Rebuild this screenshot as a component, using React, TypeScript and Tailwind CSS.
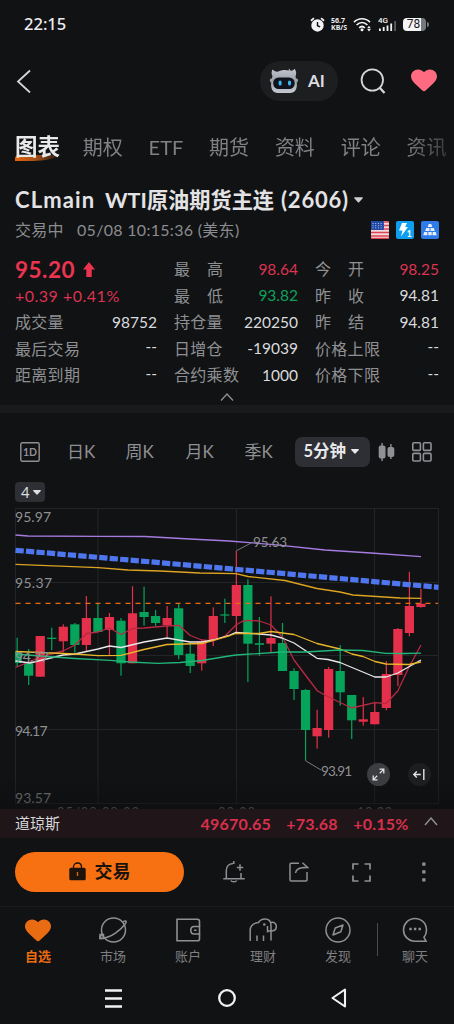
import type { ReactNode } from 'react';

const tabs = ['期权', 'ETF', '期货', '资料', '评论', '资讯'];

type Quote = { label: string; value: string; color?: string };

const quotes: Quote[][] = [
  [
    { label: '成交量', value: '98752' },
    { label: '最后交易', value: '--' },
    { label: '距离到期', value: '--' },
  ],
  [
    { label: '最高', value: '98.64', color: 'text-[#dc3350]' },
    { label: '最低', value: '93.82', color: 'text-[#0fa05c]' },
    { label: '持仓量', value: '220250' },
    { label: '日增仓', value: '-19039' },
    { label: '合约乘数', value: '1000' },
  ],
  [
    { label: '今开', value: '98.25', color: 'text-[#dc3350]' },
    { label: '昨收', value: '94.81' },
    { label: '昨结', value: '94.81' },
    { label: '价格上限', value: '--' },
    { label: '价格下限', value: '--' },
  ],
];

const UP = '#e5304b';
const DOWN = '#06a45b';

// [body top, body bottom, wick top, wick bottom, rising]
const candles: [number, number, number, number, boolean][] = [
  [652, 663, 637.7, 666.7, false],
  [663.3, 675.7, 649, 685, false],
  [636, 676.7, 636, 676.7, true],
  [637.7, 639, 627.7, 650, false],
  [626.7, 641.3, 624.3, 652.3, true],
  [624.3, 645, 623, 652.7, false],
  [618, 645, 596, 651, true],
  [618, 632, 604, 632, false],
  [617, 630, 613, 655, true],
  [620.7, 663.3, 618, 675.7, false],
  [613.3, 663.3, 586.3, 663.3, true],
  [612, 617, 586.7, 625.7, false],
  [616, 623, 610, 626, false],
  [618, 625.3, 606, 637, true],
  [608.3, 655, 603.3, 659.3, false],
  [653.7, 666, 641.7, 673, false],
  [641.3, 663.3, 640, 670.7, true],
  [616, 640, 607.3, 646, true],
  [614.4, 615.6, 598.7, 623, false],
  [585, 616, 550.7, 633, true],
  [585, 643.7, 579.3, 682, false],
  [643.2, 644.8, 617, 655.7, false],
  [638, 643.7, 596.3, 652.3, true],
  [643, 671, 623, 671, false],
  [671, 689, 668.3, 700, false],
  [690, 730, 689, 760.7, false],
  [728, 736.3, 709.7, 748.7, true],
  [669, 730, 667, 737.7, true],
  [671, 692.3, 645, 705.7, false],
  [695, 720.3, 695, 739, false],
  [719.3, 721.7, 697, 725.7, true],
  [712, 724.3, 702.7, 724.3, true],
  [674, 708, 661, 710.3, true],
  [629, 675, 628, 686, true],
  [606, 633, 571.7, 636.3, true],
  [603.8, 607, 589, 607.7, true],
];

const averages = [
  { color: '#a57be0', points: '15.5,535 28,536 98,536.3 145,536.5 190,539 229,541 274,544.7 325,550 371,553 421,556.7' },
  {
    color: '#dba321',
    points:
      '15.5,564.3 98,567.7 128,570 160,571 200,573 236,573.7 248,576.5 285,580.5 317,588.5 340,592 353,595 400,598 421,598.3',
  },
  {
    color: '#b82a42',
    points:
      '15.5,667.5 28.7,662 40,657 63,651 75,645 86.5,633.5 98,632 109.5,628 121,634.5 132.7,628.5 144,628 167,626 178.8,625.3 190.3,635.5 201.8,640 213,641 225,636 236,625 242,621.5 248,620.3 259.5,621 271,625 282.5,637 294,660 317.5,691 328.6,697 351.7,708 374.8,702.7 386,703.5 397.8,691 409,667 421,645',
  },
  {
    color: '#e8e8ea',
    points:
      '15.5,661 30,663 63,655 75,654 98,649 109.5,646 121,647.5 144,642 167,638 190,642 202,642 213,640 230,635 236,632.3 271,635 282,638 294,643 317,658.3 328,659.5 340,662.5 374.8,677 386,677 397.8,673 421,660',
  },
  {
    color: '#e9b52a',
    points:
      '15.5,651.5 40,652.5 75,654 98,655.7 121,655.3 144,649.5 167,644.5 202,643.5 230,635.5 236,633.5 259,633.5 271,631.5 294,634.5 317,643.5 340,649 352,654 363,656.5 375,661.5 386,664 409,664.5 421,662',
  },
  {
    color: '#22b57a',
    points:
      '15.5,654 40,656 75,658.5 110,660.3 130,662 158,663.3 180,662.5 202,660.5 229,656 236,655 282,652 305,652 340,650 363,650.5 386,653.3 405,653.5 421,653.2',
  },
];

function Caret({ className }: { className: string }) {
  return (
    <svg viewBox="0 0 10 6" className={className} fill="currentColor">
      <path d="M.8 0h8.4c.6 0 .9.6.5 1L5.6 5.6a.8.8 0 0 1-1.2 0L.3 1C-.1.6.2 0 .8 0Z" />
    </svg>
  );
}

function Heart({ className }: { className: string }) {
  return (
    <svg viewBox="0 0 27 23" className={className} fill="currentColor">
      <path d="M13.5 3C15.4 .8 17.3 0 19.6 0 23.7 0 27 3 27 7.2 27 10.2 25.4 12.4 23 14.6L15.2 22C14.2 23 12.8 23 11.8 22L4 14.6C1.6 12.4 0 10.2 0 7.2 0 3 3.3 0 7.4 0 9.7 0 11.6.8 13.5 3Z" />
    </svg>
  );
}

function StatusBar() {
  return (
    <div className="flex h-12 shrink-0 items-center pl-6 pr-[25px] text-[#ececee]">
      <span className="font-['Noto_Sans'] text-[16.5px] font-medium">22:15</span>
      <div className="ml-auto flex h-4 items-center">
        <svg viewBox="0 0 16 16" className="h-[15px] w-[15px]">
          <circle cx="8" cy="9" r="6.6" fill="#f4f4f5" />
          <path d="M1 4 4.2 1.2M15 4 11.8 1.2" stroke="#f4f4f5" strokeWidth="1.8" />
          <path d="M8 5.3V9.3L10.8 10.6" stroke="#111214" strokeWidth="1.5" fill="none" />
        </svg>
        <div className="ml-1.5 flex w-[17px] flex-col font-['Noto_Sans'] text-[7px] font-bold leading-[7px]">
          <span>56.7</span>
          <span>KB/S</span>
        </div>
        <svg viewBox="0 0 19 15" className="ml-[5px] h-[15px] w-[19px]" fill="none" stroke="#f4f4f5">
          <path d="M1 5.2C5.5.6 12.5.6 17 5.2M3.6 8C6.8 4.8 11.2 4.8 14.4 8M6.2 10.8C7.9 9.2 10.1 9.2 11.8 10.8" strokeWidth="1.7" />
          <circle cx="9" cy="12.8" r="1.5" fill="#f4f4f5" stroke="none" />
          <path d="m16 8.8 1.8 2.5h-3.6ZM16 14.500l1.800-2.500h-3.600Z" fill="#f4f4f5" stroke="none" />
        </svg>
        <svg viewBox="0 0 20 16" className="ml-[6px] h-4 w-5" fill="#f4f4f5">
          <text x="0" y="7.2" fontSize="8" fontWeight="500" fontFamily="Roboto">4G</text>
          <path d="M1 12.500h1.800v2.500H1ZM4.800 11h1.800v4H4.800ZM8.600 9.500h1.800V15H8.600ZM12.300 7.500h1.800V15h-1.800Z" />
          <path d="M16.200 5H18v10h-1.800Z" fill="#5b5c5f" />
        </svg>
        <div className="ml-[5px] flex h-[13px] w-[23px] items-center overflow-hidden rounded-[4px] bg-linear-to-r from-[#f4f4f5] from-78% to-[#77787b] to-78%">
          <span className="w-full pr-0.5 text-center font-['Roboto'] text-[12px] leading-[13px] text-[#1a1a1c]">78</span>
        </div>
        <div className="ml-px h-[5px] w-[2px] rounded-r bg-[#77787b]" />
      </div>
    </div>
  );
}

function Robot() {
  return (
    <svg viewBox="0 0 30 26" className="h-[26px] w-[30px]">
      <defs>
        <linearGradient id="shell" x1="0" y1="0" x2="0" y2="1">
          <stop offset="0" stopColor="#c3c7cf" />
          <stop offset=".5" stopColor="#9aa0aa" />
          <stop offset="1" stopColor="#c7cad2" />
        </linearGradient>
      </defs>
      <path
        d="M3.5 1.5C5 3 7 4 9.5 3.5 13 1.6 17 1.5 20.5 3 22.8 3.3 24.5 2.2 25.5.8 27.5 3 27.6 6 26.5 8.5L27 10.5C29.5 10 29.6 13.5 27.8 14.5 28.5 21 26 25 21 25H9C4 25 1.5 21 2.2 14.5.2 13.5.5 10 2.8 10.5L3.5 8C2.3 6 2.3 3.5 3.5 1.5Z"
        fill="url(#shell)"
      />
      <path d="M20 .5 23 4.5 19.5 3Z" fill="#b9bdc5" />
      <rect x="4.2" y="9.5" width="21.5" height="11.5" rx="5.5" fill="#10131c" />
      <rect x="9.6" y="12.5" width="3" height="5" rx="1.5" fill="#39b4f5" />
      <rect x="19" y="12.5" width="3" height="5" rx="1.5" fill="#39b4f5" />
    </svg>
  );
}

function Header() {
  return (
    <div className="flex h-[65px] shrink-0 items-center pl-4 pr-[17px]">
      <svg viewBox="0 0 16 24" className="h-6 w-4" fill="none" stroke="#d5d6d8" strokeWidth="1.8">
        <path d="M14 1.5 2 12.5 14 23.5" />
      </svg>
      <div className="ml-auto flex h-10 w-[78px] items-center rounded-full bg-[#1d1e20] pl-[9px]">
        <Robot />
        <span className="ml-[9px] text-[17px] font-bold text-[#dcdde0]">AI</span>
      </div>
      <svg viewBox="0 0 26 26" className="ml-[22px] h-[26px] w-[26px]" fill="none" stroke="#d5d6d8" strokeWidth="1.8">
        <circle cx="12.3" cy="12" r="10.7" />
        <path d="m19.5 19.5 5 5.5" strokeWidth="2.3" />
      </svg>
      <Heart className="ml-[25px] h-[23px] w-[26px] text-[#ff6b80]" />
    </div>
  );
}

function Tabs() {
  return (
    <div className="flex h-[67px] shrink-0 items-center gap-[25.8px] overflow-hidden whitespace-nowrap pl-[15px] text-[20px] text-[#808184] mask-[linear-gradient(to_right,black_89%,transparent_104%)]">
      <div className="relative -mr-[3px] text-[22.5px] font-bold leading-7 text-[#e9e9eb]">
        <svg viewBox="0 0 46 6" className="absolute bottom-0 left-0 h-[6px] w-[46px]" preserveAspectRatio="none">
          <defs>
            <linearGradient id="swoosh">
              <stop offset="0" stopColor="#e9670f" />
              <stop offset=".45" stopColor="#a64f16" />
              <stop offset="1" stopColor="#111214" />
            </linearGradient>
          </defs>
          <path d="M3 0H46C40 3 30 6 18 6H0V4C0 2 1 0 3 0Z" fill="url(#swoosh)" />
        </svg>
        <span className="relative">图表</span>
      </div>
      {tabs.map((t) => (
        <span key={t} className="shrink-0">{t}</span>
      ))}
    </div>
  );
}

function Title() {
  return (
    <div className="shrink-0 px-[15px]">
      <div className="flex h-10 items-center whitespace-pre text-[21.2px] font-bold leading-8 text-[#e3e3e5]">
        <span className="w-[90px] text-[22px] tracking-[1.1px]">CLmain</span>
        <span className="text-[21.5px]">WTI</span>
        <span>原油期货主连</span>
        <span className="ml-[7px] text-[22px] tracking-[0.8px]">(2606)</span>
        <Caret className="ml-[5px] h-[6px] w-[9px] text-[#cfd0d2]" />
      </div>
      <div className="flex h-5 items-center text-[16px] text-[#8b8c8f]">
        <span className="w-[62px] tracking-[0.3px]">交易中</span>
        <span className="tracking-[0.3px]">05/08 10:15:36 (美东)</span>
        <div className="ml-auto flex gap-[7px]">
          <svg viewBox="0 0 18 18" className="h-[18px] w-[18px]">
            <rect width="18" height="18" rx="2" fill="#f1d9dc" />
            <path d="M0 1h18M0 4.500h18M0 8h18M0 11.500h18M0 15h18M0 17.500h18" stroke="#e04556" strokeWidth="1.7" />
            <rect width="13" height="9" rx="1" fill="#2148a5" />
            <path d="M1.500 2.500h11M1.500 4.700h11M1.500 6.900h11" stroke="#b9c7ec" strokeDasharray="1 1.7" />
          </svg>
          <svg viewBox="0 0 18 18" className="h-[18px] w-[18px]">
            <rect width="18" height="18" rx="2" fill="#0f9ff0" />
            <path d="M6 2h5L9.2 6H12L5 15.5 6.5 9.5H3Z" fill="#fff" />
            <text x="10.8" y="15.8" fontSize="8.5" fontWeight="700" fontFamily="Lato" fill="#fff">1</text>
          </svg>
          <svg viewBox="0 0 18 18" className="h-[18px] w-[18px]">
            <rect width="18" height="18" rx="2" fill="#2f7be8" />
            <path d="M7.7 3h2.600l1 3H6.700ZM5.200 7h3.300v3H4.200ZM9.500 7h3.300l1 3H9.500ZM3.200 11h3l.3 3.300H2.200ZM7.300 11h3.400v3.300H7.300ZM11.700 11h3l1 3.300h-4.300Z" fill="#e8f0fd" />
          </svg>
        </div>
      </div>
    </div>
  );
}

function QuoteRow({ label, value, color = 'text-[#dadbdd]' }: Quote) {
  return (
    <div className="flex h-[26.5px] items-center justify-between text-[16px] leading-6">
      {label.length === 2 ? (
        <span className="flex w-[49px] justify-between text-[#8f9093]">
          <span>{label[0]}</span>
          <span>{label[1]}</span>
        </span>
      ) : (
        <span className="tracking-[0.3px] text-[#8f9093]">{label}</span>
      )}
      <span className={`text-[15.5px] ${value === '--' ? '-mt-[5px]' : '-mt-px'} ${color}`}>{value}</span>
    </div>
  );
}

function Quotes() {
  return (
    <div className="shrink-0 px-[15px] pt-4">
      <div className="grid grid-cols-[142px_124px_124px] gap-[17px]">
        <div>
          <div className="flex h-[27px] items-center text-[#ea3450]">
            <span className="text-[22.5px] font-bold tracking-[0.5px]">95.20</span>
            <svg viewBox="0 0 12 15" className="ml-[7.5px] h-[15px] w-3" fill="currentColor">
              <path d="M6 0 12 7.5H8.7V15H3.3V7.5H0Z" />
            </svg>
          </div>
          <div className="flex h-[26px] items-center text-[16px] tracking-[0.5px] text-[#dc3350]">+0.39 +0.41%</div>
          {quotes[0].map((q) => <QuoteRow key={q.label} {...q} />)}
        </div>
        {quotes.slice(1).map((col, i) => (
          <div key={i}>
            {col.map((q) => <QuoteRow key={q.label} {...q} />)}
          </div>
        ))}
      </div>
      <div className="flex h-[16.5px] items-center justify-center">
        <svg viewBox="0 0 14 8" className="h-2 w-[14px]" fill="none" stroke="#8f9093" strokeWidth="1.3">
          <path d="M1 7.5 7 1 13 7.5" />
        </svg>
      </div>
    </div>
  );
}

function Intervals() {
  return (
    <div className="flex h-[77px] shrink-0 items-center pl-5 text-[17px] text-[#8f9093]">
      <svg viewBox="0 0 20 20" className="h-5 w-5" fill="none" stroke="currentColor" strokeWidth="1.4">
        <rect x=".8" y=".8" width="18.4" height="18.4" rx="1.5" />
        <text x="10" y="13.8" textAnchor="middle" fontSize="10.5" fontWeight="700" fontFamily="Lato" fill="currentColor" stroke="none">1D</text>
      </svg>
      <span className="ml-[27px] w-[58.5px]">日K</span>
      <span className="w-[60px]">周K</span>
      <span className="w-[59px]">月K</span>
      <span className="w-12">季K</span>
      <div className="ml-0.5 flex h-[30px] w-[75px] items-center rounded-[7px] bg-[#2d2f34] pl-[9px] font-bold text-[#e8e8ea]">
        <span className="whitespace-nowrap text-[16.5px]">5分钟</span>
        <Caret className="ml-[5px] h-[5px] w-2" />
      </div>
      <svg viewBox="0 0 17 18" className="ml-[8px] h-[18px] w-[17px]" fill="currentColor">
        <path d="M3.4 0h1.400v18H3.400ZM12.200 1h1.400v15h-1.400Z" />
        <rect x=".7" y="2.5" width="6.8" height="13" rx="2" />
        <rect x="9.5" y="4" width="6.8" height="10" rx="2" />
      </svg>
      <svg viewBox="0 0 20 20" className="ml-[17px] h-5 w-5" fill="none" stroke="currentColor" strokeWidth="1.6">
        <rect x=".8" y=".8" width="7.6" height="7.6" rx="1" />
        <rect x="11.4" y=".8" width="7.6" height="7.6" rx="1" />
        <rect x=".8" y="11.4" width="7.6" height="7.6" rx="1" />
        <rect x="11.4" y="11.4" width="7.6" height="7.6" rx="1" />
      </svg>
    </div>
  );
}

function Chart() {
  return (
    <div className="relative h-[301px] shrink-0">
      <svg viewBox="0 508 454 301" className="block h-[301px] w-full" fontFamily="Lato, sans-serif">
        <defs>
          <clipPath id="plot">
            <rect x="15" y="508" width="424" height="301" />
          </clipPath>
          <linearGradient id="fade" x1="0" y1="0" x2="0" y2="1">
            <stop offset="0" stopColor="#0b0c0d" stopOpacity="0" />
            <stop offset="1" stopColor="#0b0c0d" stopOpacity=".5" />
          </linearGradient>
        </defs>
        <path
          d="M15.5 508.5H438.5V803.5H15.5ZM15.5 582.5H438.5M15.5 655.5H438.5M15.5 729.5H438.5M98 508.5V803M236.5 508.5V803M374.5 508.5V803"
          fill="none"
          stroke="#232427"
        />
        <g clipPath="url(#plot)">
          {candles.map(([top, bottom, high, low, up], i) => {
            const x = 17.15 + i * 11.537;
            return (
              <g key={i} fill={up ? UP : DOWN}>
                <rect x={x - 0.6} y={high} width="1.2" height={low - high} />
                <rect x={x - 4.6} y={top} width="9.2" height={bottom - top} />
              </g>
            );
          })}
          <path d="M15.5 603.4H438" stroke="#ea6c12" strokeWidth="1.4" strokeDasharray="5 5" />
          {averages.map((a) => (
            <polyline key={a.color} points={a.points} fill="none" stroke={a.color} strokeWidth="1.3" strokeLinejoin="round" />
          ))}
          <path d="M15.5 550.3 98 557.3 229 568.7 438.5 587.3" fill="none" stroke="#4e76ee" strokeWidth="5.2" strokeDasharray="8.3 2.2" />
        </g>
        <path d="M236.5 550.7 253 542M305.5 760.7 321 770" stroke="#77787b" />
        <g fill="#8f9093" fontSize="14">
          <text x="15" y="522" textLength="36">95.97</text>
          <text x="15" y="588" textLength="37">95.37</text>
          <text x="15" y="662" textLength="34">94.77</text>
          <text x="15" y="736" textLength="32.5">94.17</text>
          <text x="15" y="803" textLength="36" fill="#808184">93.57</text>
          <text x="253" y="546.5" textLength="34" fontSize="13.5">95.63</text>
          <text x="321" y="776" textLength="31" fontSize="13.5">93.91</text>
        </g>
        <g fill="#6d6e71" fontSize="13">
          <text x="57" y="816.5" textLength="82">05/08 08:20</text>
          <text x="218" y="816.5" textLength="37">09:20</text>
          <text x="357" y="816.5" textLength="35">10:20</text>
        </g>
        <rect x="0" y="775" width="454" height="34" fill="url(#fade)" />
      </svg>
      <div className="absolute left-[367px] top-[255px] flex gap-[18px]">
        <svg viewBox="0 0 23 23" className="h-[23px] w-[23px]" fill="none" stroke="#e4e4e6" strokeWidth="1.3">
          <circle cx="11.5" cy="11.5" r="11.5" fill="#3c3d40" stroke="none" />
          <path d="M12.8 10.2 16.6 6.4M12.500 6.200h4.300v4.300M10.200 12.800 6.400 16.600M6.200 12.500v4.300h4.300" />
        </svg>
        <svg viewBox="0 0 23 23" className="h-[23px] w-[23px]" fill="none" stroke="#e4e4e6" strokeWidth="1.4">
          <circle cx="11.5" cy="11.5" r="11.5" fill="#1d1e20" stroke="none" />
          <path d="M12.8 11.5H6M8.8 8.5 5.8 11.5 8.8 14.5M15.8 6V17" />
        </svg>
      </div>
    </div>
  );
}

function IndexTicker() {
  return (
    <div className="flex h-[29px] shrink-0 items-center bg-[#20161a] pl-[15px] pr-4">
      <span className="text-[15px] text-[#d6d6d8]">道琼斯</span>
      <div className="ml-auto flex items-center gap-[15.5px] text-[16px] font-bold tracking-[0.2px] text-[#d8304b]">
        <span>49670.65</span>
        <span>+73.68</span>
        <span>+0.15%</span>
        <svg viewBox="0 0 14 9" className="-mt-1 h-[9px] w-[14px]" fill="none" stroke="#8f9093" strokeWidth="1.4">
          <path d="M1 8 7 1 13 8" />
        </svg>
      </div>
    </div>
  );
}

function Actions() {
  return (
    <div className="flex h-[69px] shrink-0 items-center border-b border-[#1a1b1d] pl-[15px] text-[#8f9093]">
      <div className="-mt-px flex h-10 w-[169px] items-center justify-center gap-[9px] rounded-full bg-[#f77112] text-[#1c130c]">
        <svg viewBox="0 0 17 19" className="h-[19px] w-[17px]">
          <path d="M4.5 6.5V5C4.5 2.7 6.2 1 8.5 1S12.5 2.7 12.5 5V6.5" fill="none" stroke="currentColor" strokeWidth="1.3" />
          <rect x=".3" y="5.8" width="16.4" height="12.5" rx="1.6" fill="currentColor" />
          <path d="M8.500 10v4" stroke="#d9690f" strokeWidth="1.4" />
        </svg>
        <span className="text-[18px] font-bold">交易</span>
      </div>
      <svg viewBox="0 0 22 22" className="ml-[39px] h-[22px] w-[22px]" fill="none" stroke="currentColor" strokeWidth="1.5">
        <path d="M.3 17.7H21.7M3.3 17.5V9.5C3.3 5.5 6 2.7 10 2.5M18 12V17.5M10.8 0V3M13.8 6.5H20.2M17 3.3V9.7M7.8 19.5C8.8 21.3 12.8 21.3 13.8 19.5" />
      </svg>
      <svg viewBox="0 0 20 20" className="ml-[43.5px] h-5 w-5" fill="none" stroke="currentColor" strokeWidth="1.5">
        <path d="M10 1.2H2C1.3 1.2 1 1.5 1 2.2V18C1 18.7 1.3 19 2 19H17C17.7 19 18 18.7 18 18V10M6.5 11C7 7 10 5.5 18.5 5.5M13.5.8 18.700 5.500H14" />
      </svg>
      <svg viewBox="0 0 19 19" className="ml-[43px] h-[19px] w-[19px]" fill="none" stroke="currentColor" strokeWidth="1.7">
        <path d="M1 6.5V1H6.5M12.5 1H18V6.5M18 12.5V18H12.5M6.5 18H1V12.5" />
      </svg>
      <svg viewBox="0 0 4 20" className="ml-[51px] h-5 w-1" fill="currentColor">
        <path d="M.2.500h3.300v3.300H.2ZM.2 8.300h3.300v3.300H.2ZM.2 16.200h3.300v3.300H.2Z" />
      </svg>
    </div>
  );
}

function NavItem({ label, active, children }: { label: string; active?: boolean; children: ReactNode }) {
  return (
    <div className={`flex w-[75px] flex-col items-center ${active ? 'font-bold text-[#ea6c12]' : 'text-[#7e7f82]'}`}>
      <div className="flex h-7 items-center text-[#8f9093]">{children}</div>
      <span className="mt-[2px] text-[13px] leading-5">{label}</span>
    </div>
  );
}

function BottomNav() {
  const icon = 'h-[26px] w-7';
  return (
    <div className="flex h-[65px] shrink-0 pl-[0.5px] pt-[9px]">
      <NavItem label="自选" active>
        <Heart className="h-[23px] w-[26px] text-[#ea6c12]" />
      </NavItem>
      <NavItem label="市场">
        <svg viewBox="0 0 28 26" className={icon} fill="none" stroke="currentColor" strokeWidth="1.5">
          <circle cx="14.5" cy="13" r="12" />
          <path d="M3.5 17.5C.3 20 .2 22.5 3 21.3 12 20.5 22 13 26.5 6.5 28.5 3.5 26 3.5 23.5 5.3" />
          <path d="M1 17.5H4.5V21.5H.8Z" />
        </svg>
      </NavItem>
      <NavItem label="账户">
        <svg viewBox="0 0 28 26" className={icon} fill="none" stroke="currentColor" strokeWidth="1.6">
          <path d="M25.5 9.5V4.5C25.5 3 24.8 2.2 23.5 2.2H3V23.8H23.500C24.800 23.800 25.500 23 25.500 21.700V17" />
          <path d="M25.5 9.500H20C18 9.500 16.800 11 16.800 13.200S18 17 20 17H25.500ZM20 13.200H22.500" />
        </svg>
      </NavItem>
      <NavItem label="理财">
        <svg viewBox="0 0 28 26" className={icon} fill="none" stroke="currentColor" strokeWidth="1.5">
          <path d="M1.2 24V13.5C1.2 8.5 4.5 6 9.5 5.5 11 3 13.5 2 16 2 20.5 2 22 5 22 8.5V23.5M8 18.5V24M14.5 18.5V24M18.5 9V15.5M22 5.5C25.5 4.5 27.3 7 27.3 9.5 27.3 12.5 25.5 14 22 14H18.5" />
          <circle cx="15.3" cy="7.5" r="1.3" fill="currentColor" stroke="none" />
        </svg>
      </NavItem>
      <NavItem label="发现">
        <svg viewBox="0 0 28 26" className={icon} fill="none" stroke="currentColor" strokeWidth="1.5">
          <circle cx="14" cy="13" r="12" />
          <path d="M19 8 16.8 14.8 9 18 11.2 11Z" strokeLinejoin="round" />
        </svg>
      </NavItem>
      <div className="ml-px mt-[7px] h-[33px] w-px bg-[#4a4b4e]" />
      <NavItem label="聊天">
        <svg viewBox="0 0 28 26" className={icon} fill="none" stroke="currentColor" strokeWidth="1.6">
          <path d="M25 24.2H14C7.5 24.2 2.5 19 2.5 12.9S7.5 1.5 14 1.5 25.5 6.5 25.5 12.9C25.5 16 24.5 18.5 23 20.3L25 24.2Z" />
          <path d="M8.300 12h2.400M12.900 12h2.400M17.500 12h2.400" strokeWidth="2.4" />
        </svg>
      </NavItem>
    </div>
  );
}

function SystemNav() {
  return (
    <div className="flex h-[52px] shrink-0 items-center pl-[105px]">
      <svg viewBox="0 0 17 19" className="h-[19px] w-[17px]" stroke="#f2f2f3" strokeWidth="2.4">
        <path d="M0 1.5H17M0 9.5H17M0 17.5H17" />
      </svg>
      <svg viewBox="0 0 18 18" className="ml-24 h-[18px] w-[18px]" fill="none" stroke="#f2f2f3" strokeWidth="2.3">
        <circle cx="9" cy="9" r="7.8" />
      </svg>
      <svg viewBox="0 0 16 20" className="ml-[95px] h-5 w-4" fill="none" stroke="#f2f2f3" strokeWidth="2.1" strokeLinejoin="round">
        <path d="M14 1.5V18.5L1.5 10Z" />
      </svg>
    </div>
  );
}

export default function App() {
  return (
    <div className="flex h-[1024px] w-[454px] flex-col overflow-hidden bg-[#111214] font-['Lato','Noto_Sans_CJK_SC',sans-serif]">
      <StatusBar />
      <Header />
      <Tabs />
      <Title />
      <Quotes />
      <div className="h-2 shrink-0 bg-[#191a1c]" />
      <Intervals />
      <div className="h-[18px] shrink-0 px-[15px]">
        <div className="-mt-2 flex h-5 w-[30px] items-center rounded-[4px] bg-[#2d2f34] pl-[6px] text-[15px] text-[#dcdde0]">
          4
          <Caret className="ml-[3px] h-[5px] w-2" />
        </div>
      </div>
      <Chart />
      <IndexTicker />
      <Actions />
      <BottomNav />
      <SystemNav />
    </div>
  );
}
